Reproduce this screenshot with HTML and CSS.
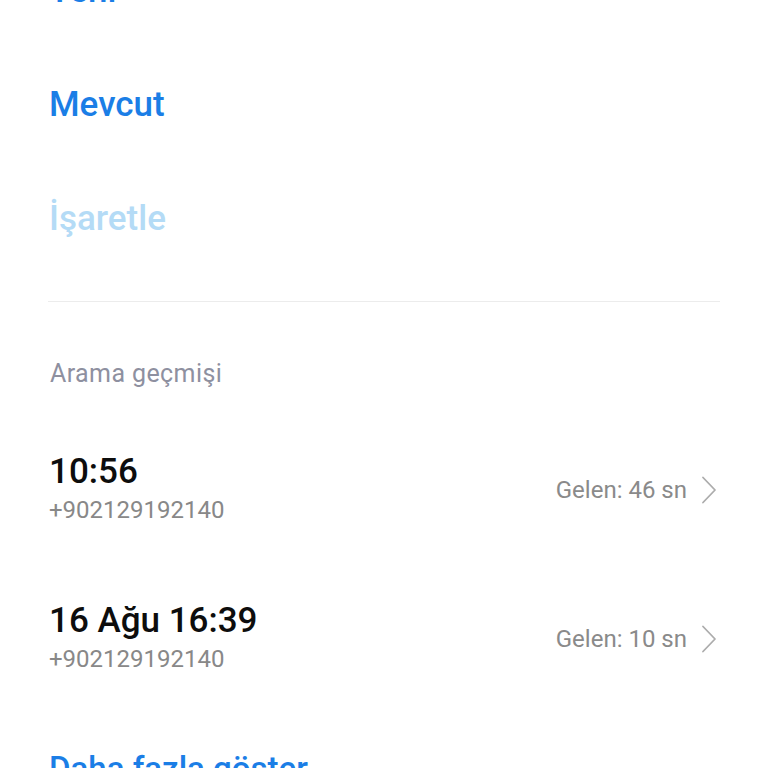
FILE: index.html
```html
<!DOCTYPE html>
<html lang="tr">
<head>
<meta charset="utf-8">
<link rel="stylesheet" href="styles.css">
</head>
<body>
<div class="page">
  <ul class="menu">
    <li class="menu-item">Yeni</li>
    <li class="menu-item">Mevcut</li>
    <li class="menu-item disabled">İşaretle</li>
  </ul>
  <hr class="divider">
  <div class="section-title">Arama geçmişi</div>
  <div class="calls">
    <div class="call">
      <div class="call-main">
        <div class="call-time">10:56</div>
        <div class="call-number">+902129192140</div>
      </div>
      <div class="call-meta">
        <span class="call-duration">Gelen: 46 sn</span>
        <svg class="chevron" width="16" height="28" viewBox="0 0 16 28"><path d="M2 1.5 L14 14 L2 26.5" fill="none" stroke="#acacac" stroke-width="1.8" stroke-linecap="round" stroke-linejoin="round"/></svg>
      </div>
    </div>
    <div class="call">
      <div class="call-main">
        <div class="call-time">16 Ağu 16:39</div>
        <div class="call-number">+902129192140</div>
      </div>
      <div class="call-meta">
        <span class="call-duration">Gelen: 10 sn</span>
        <svg class="chevron" width="16" height="28" viewBox="0 0 16 28"><path d="M2 1.5 L14 14 L2 26.5" fill="none" stroke="#acacac" stroke-width="1.8" stroke-linecap="round" stroke-linejoin="round"/></svg>
      </div>
    </div>
  </div>
  <div class="more">Daha fazla göster</div>
</div>
</body>
</html>
```
FILE: styles.css
```css
html, body {
  margin: 0;
  padding: 0;
  background: #ffffff;
  overflow: hidden;
}
body {
  font-family: Roboto, "Noto Sans", sans-serif;
  width: 768px;
  height: 768px;
}
.page {
  padding: 0 48px;
  margin-top: -66px;
}
.menu {
  list-style: none;
  margin: 0;
  padding: 0;
}
.menu-item {
  font-size: 35px;
  font-weight: 500;
  line-height: 114px;
  height: 114px;
  color: #1b7ee6;
  padding-left: 1px;
}
.menu-item.disabled {
  color: #b4dbf6;
}
.divider {
  border: 0;
  height: 1px;
  background: #ececec;
  margin: 25px 0 0;
}
.section-title {
  margin-top: 58px;
  font-size: 25px;
  letter-spacing: 0.4px;
  line-height: 28px;
  color: #8e90a0;
  padding-left: 2px;
}
.calls {
  margin-top: 27px;
}
.call {
  display: flex;
  align-items: center;
  justify-content: space-between;
  padding: 36.5px 0;
}
.call-main {
  display: flex;
  flex-direction: column;
}
.call-time {
  font-size: 35px;
  font-weight: 500;
  line-height: 40px;
  color: #0d0d0d;
  padding-left: 1px;
}
.call-number {
  font-size: 24px;
  line-height: 36px;
  color: #888888;
  padding-left: 1px;
}
.call-meta {
  display: flex;
  align-items: center;
  gap: 14px;
}
.call-duration {
  font-size: 24px;
  line-height: 28px;
  color: #8a8a8a;
}
.chevron {
  display: block;
  margin-right: 3px;
}
.more {
  margin-top: 36px;
  font-size: 33px;
  font-weight: 500;
  line-height: 40px;
  color: #1b7ee6;
  padding-left: 1px;
}
```
